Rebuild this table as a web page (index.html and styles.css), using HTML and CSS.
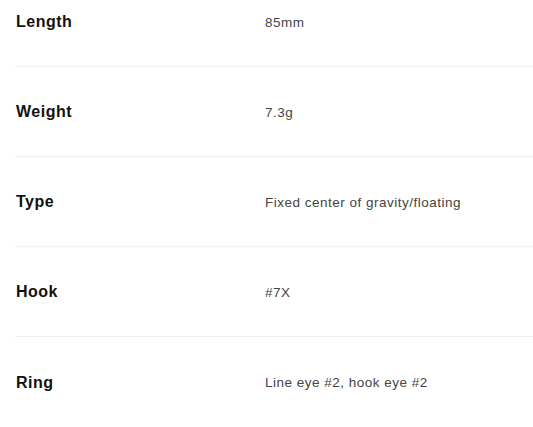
FILE: index.html
```html
<!DOCTYPE html>
<html>
<head>
<meta charset="utf-8">
<link rel="stylesheet" href="styles.css">
</head>
<body>
<dl class="specs">
  <div class="row"><dt>Length</dt><dd>85mm</dd></div>
  <div class="row"><dt>Weight</dt><dd>7.3g</dd></div>
  <div class="row"><dt>Type</dt><dd>Fixed center of gravity/floating</dd></div>
  <div class="row"><dt>Hook</dt><dd>#7X</dd></div>
  <div class="row last"><dt>Ring</dt><dd>Line eye #2, hook eye #2</dd></div>
</dl>
</body>
</html>
```
FILE: styles.css
```css
html, body {
  margin: 0;
  padding: 0;
  background: #fff;
}
.specs {
  margin: -23px 0 0 15px;
  padding: 0;
}
.row {
  display: grid;
  grid-template-columns: 250px 1fr;
  align-items: center;
  height: 89px;
  padding-top: 1px;
  box-sizing: border-box;
  height: 90px;
  border-bottom: 1px solid #f1f1f1;
}
.row.last {
  border-bottom: none;
}
dt {
  margin: 0;
  padding-left: 1px;
  font-family: "Liberation Sans", Arial, sans-serif;
  font-weight: bold;
  font-size: 16px;
  letter-spacing: 0.5px;
  color: #111;
}
dd {
  margin: 0;
  font-family: "Liberation Sans", Arial, sans-serif;
  font-size: 13.5px;
  letter-spacing: 0.5px;
  color: #444;
}
```
